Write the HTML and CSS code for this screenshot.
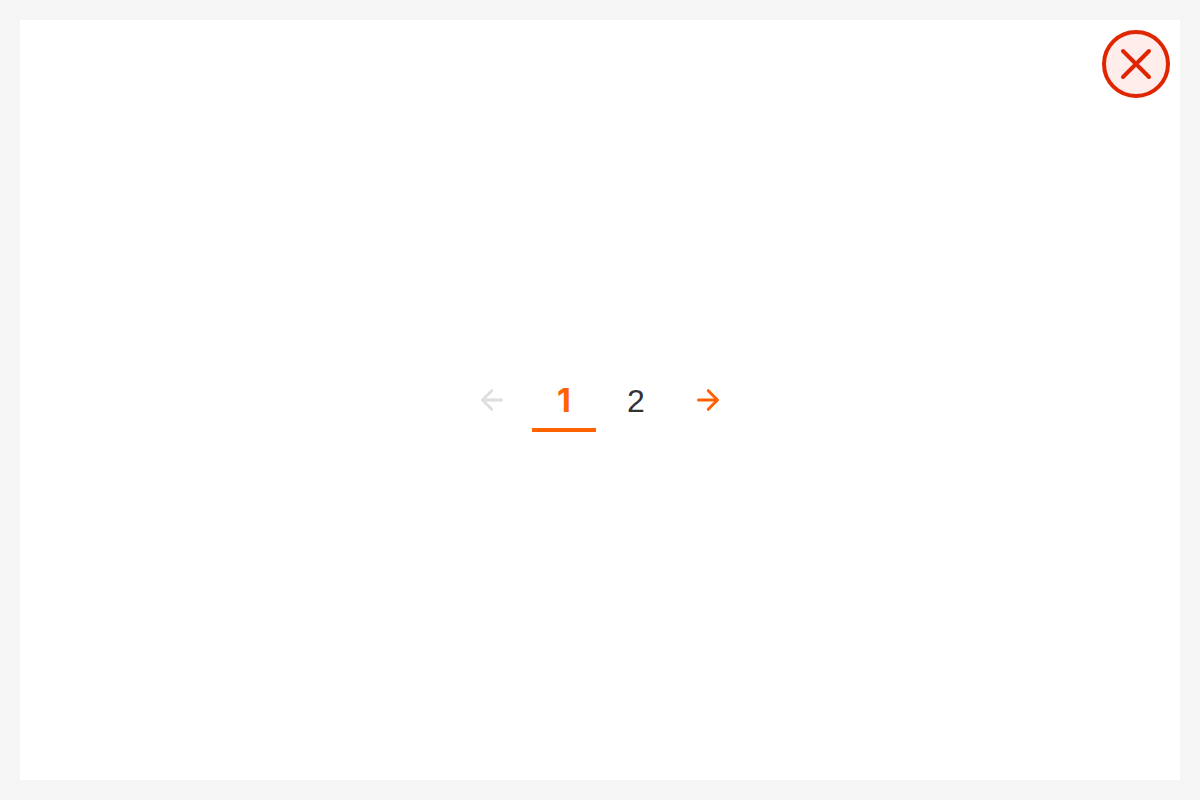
FILE: index.html
```html
<!DOCTYPE html>
<html lang="en">
<head>
<meta charset="utf-8">
<title>Pagination</title>
<link rel="stylesheet" href="styles.css">
</head>
<body>
<main class="panel">
  <button class="close" type="button" aria-label="Close">
    <svg class="close-icon" viewBox="0 0 32 32" aria-hidden="true"><path d="M3 3 29 29M29 3 3 29"/></svg>
  </button>
  <nav class="pagination" aria-label="Pagination">
    <button class="page arrow" type="button" aria-label="Previous page" disabled>
      <svg class="arrow-icon" viewBox="0 0 32 32" aria-hidden="true"><path d="M25.5 16H7M15.700 6.700 6.500 16l9.200 9.300"/></svg>
    </button>
    <button class="page number current" type="button" aria-current="page">1</button>
    <button class="page number" type="button">2</button>
    <button class="page arrow" type="button" aria-label="Next page">
      <svg class="arrow-icon" viewBox="0 0 32 32" aria-hidden="true"><path d="M6.500 16H25M16.300 6.700l9.200 9.300-9.200 9.300"/></svg>
    </button>
  </nav>
</main>
</body>
</html>
```

FILE: styles.css
```css
* {
  box-sizing: border-box;
}

body {
  margin: 0;
  padding: 20px;
  min-height: 100vh;
  display: flex;
  background: #f5f5f5;
  font-family: "Liberation Sans", Arial, sans-serif;
}

.panel {
  position: relative;
  flex: 1;
  display: flex;
  align-items: center;
  justify-content: center;
  background: #fff;
}

.close {
  position: absolute;
  top: 10px;
  right: 10px;
  width: 68px;
  height: 68px;
  padding: 0;
  display: flex;
  align-items: center;
  justify-content: center;
  border: 4px solid #e02600;
  border-radius: 50%;
  background: #ffedeb;
  color: #e02600;
  cursor: pointer;
}

.close-icon,
.arrow-icon {
  width: 32px;
  height: 32px;
  fill: none;
  stroke: currentColor;
  stroke-width: 3;
  stroke-linecap: round;
  stroke-linejoin: round;
}

.close-icon {
  stroke-width: 4;
}

.pagination {
  display: flex;
  gap: 8px;
}

.page {
  width: 64px;
  height: 64px;
  padding: 0;
  display: flex;
  align-items: center;
  justify-content: center;
  border: 0;
  background: none;
  cursor: pointer;
}

.number {
  padding-top: 2px;
  color: #333;
  font: 32px/36px "Liberation Sans", Arial, sans-serif;
}

.number.current {
  color: #ff6200;
  font-family: Inter, Arial, sans-serif;
  font-weight: 700;
  box-shadow: inset 0 -4px #ff6200;
}

.arrow {
  color: #ff6200;
}

.arrow:disabled {
  color: #dedede;
  cursor: default;
}
```
